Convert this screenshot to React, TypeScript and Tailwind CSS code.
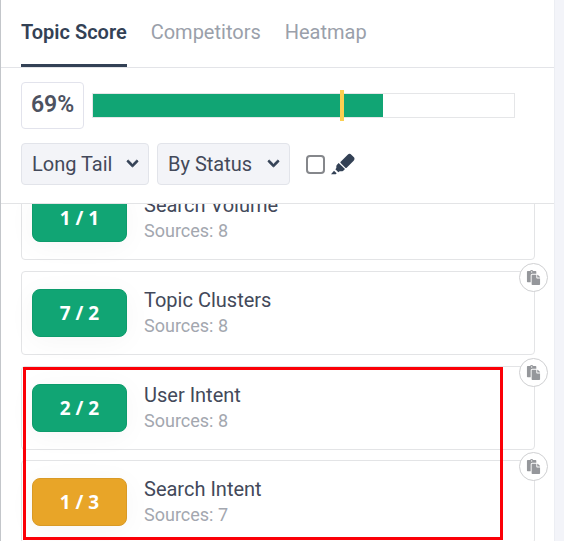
import { FaChevronDown, FaPaste } from "react-icons/fa";

interface Topic {
  name: string;
  score: string;
  sources: number;
  met: boolean;
}

const tabs = ["Topic Score", "Competitors", "Heatmap"];

const topics: Topic[] = [
  { name: "Search Volume", score: "1 / 1", sources: 8, met: true },
  { name: "Topic Clusters", score: "7 / 2", sources: 8, met: true },
];

const intentTopics: Topic[] = [
  { name: "User Intent", score: "2 / 2", sources: 8, met: true },
  { name: "Search Intent", score: "1 / 3", sources: 7, met: false },
];

function HighlighterIcon() {
  return (
    <svg
      viewBox="0 0 72 66"
      className="h-[22px] w-6 text-[#334155]"
      fill="currentColor"
      aria-hidden="true"
    >
      <path d="M29 26 50 5q6-5 11 0l7 7q5 5 0 11L47 44q-2 2-4 0L29 30q-2-2 0-4Z" />
      <path d="m23 30 19 18-6 6q-2 1-5 1h-5l-4 3-9-9 3-4v-5q0-3 2-5Z" />
      <path d="m9 53 8 8-3 3H0Z" />
    </svg>
  );
}

function TopicCard({ topic }: { topic: Topic }) {
  return (
    <article className="relative flex h-[84px] items-center gap-[17px] rounded border border-[#e3e4e6] px-2.5">
      <div
        className={`flex h-12 w-[95px] items-center justify-center rounded-lg border font-['Open_Sans',sans-serif] text-[19px] font-bold text-white shadow-[0_4px_28px_rgba(0,0,0,0.04)] ${
          topic.met
            ? "border-[#0d9c6c] bg-[#11a574]"
            : "border-[#d99a26] bg-[#e8a528]"
        }`}
      >
        {topic.score}
      </div>
      <div>
        <h2 className="text-xl leading-[26px] text-[#43495a]">{topic.name}</h2>
        <p className="text-lg leading-[26px] text-[#a3a7af]">
          Sources: {topic.sources}
        </p>
      </div>
      <button
        type="button"
        aria-label={`Copy ${topic.name}`}
        className="absolute -top-[9px] -right-3.5 z-10 flex size-[29px] items-center justify-center rounded-full border border-[#cfd0d2] bg-white text-[#95979b]"
      >
        <FaPaste className="size-[15px]" />
      </button>
    </article>
  );
}

function Filter({ label, width }: { label: string; width: string }) {
  return (
    <div className={`relative ${width}`}>
      <select
        aria-label={label}
        className="h-[42px] w-full appearance-none rounded border border-[#e2e4ea] bg-[#f3f4f8] pl-2.5 text-xl text-[#43495a]"
      >
        <option>{label}</option>
      </select>
      <FaChevronDown
        className="pointer-events-none absolute top-3.5 right-2.5 size-[13px] text-[#334155]"
        stroke="currentColor"
        strokeWidth={36}
      />
    </div>
  );
}

export default function App() {
  return (
    <div className="flex h-screen overflow-hidden bg-[#f3f4f9] pr-[9px] font-[Roboto,sans-serif]">
      <main className="flex min-w-0 flex-1 flex-col border-r border-l border-r-[#eceef3] border-l-[#c3c6ca] bg-white">
        <nav className="flex shrink-0 gap-6 border-b border-[#e3e4e8] px-5">
          {tabs.map((tab, i) => (
            <button
              key={tab}
              type="button"
              className={`border-b-3 py-[18px] text-xl leading-7 ${
                i === 0
                  ? "border-[#334155] font-semibold text-[#334155]"
                  : "border-transparent text-[#9aa0aa]"
              }`}
            >
              {tab}
            </button>
          ))}
        </nav>

        <section className="shrink-0 border-b border-[#e3e4e6] pt-3.5 pr-[39px] pb-[18px] pl-5">
          <div className="flex items-center gap-2">
            <div className="flex h-[47px] w-[63px] items-center justify-center rounded border border-[#e2e3ec] text-[23px] font-semibold text-[#4d5260]">
              69%
            </div>
            <div className="relative h-[25px] flex-1 border border-[#e5e6e8]">
              <div className="h-full w-[69%] bg-[#11a574]" />
              <div className="absolute -inset-y-1 left-[59%] w-1 -translate-x-px bg-[#fbcf51]" />
            </div>
          </div>
          <div className="mt-3.5 flex items-center gap-2">
            <Filter label="Long Tail" width="w-[128px]" />
            <Filter label="By Status" width="w-[133px]" />
            <label className="ml-2 flex items-center gap-1.5">
              <input
                type="checkbox"
                aria-label="Highlight"
                className="size-[19px] appearance-none rounded border-2 border-[#85878b] bg-white"
              />
              <HighlighterIcon />
            </label>
          </div>
        </section>

        <section className="min-h-0 flex-1 overflow-hidden pr-[19px] pl-5">
          <div className="-mt-7 flex flex-col gap-[11px]">
            {topics.map((topic) => (
              <TopicCard key={topic.name} topic={topic} />
            ))}
            <div className="relative flex flex-col gap-2.5">
              {intentTopics.map((topic) => (
                <TopicCard key={topic.name} topic={topic} />
              ))}
              <div className="pointer-events-none absolute top-px right-8 bottom-1 left-0.5 border-3 border-[#fb0007]" />
            </div>
          </div>
        </section>
      </main>
    </div>
  );
}
